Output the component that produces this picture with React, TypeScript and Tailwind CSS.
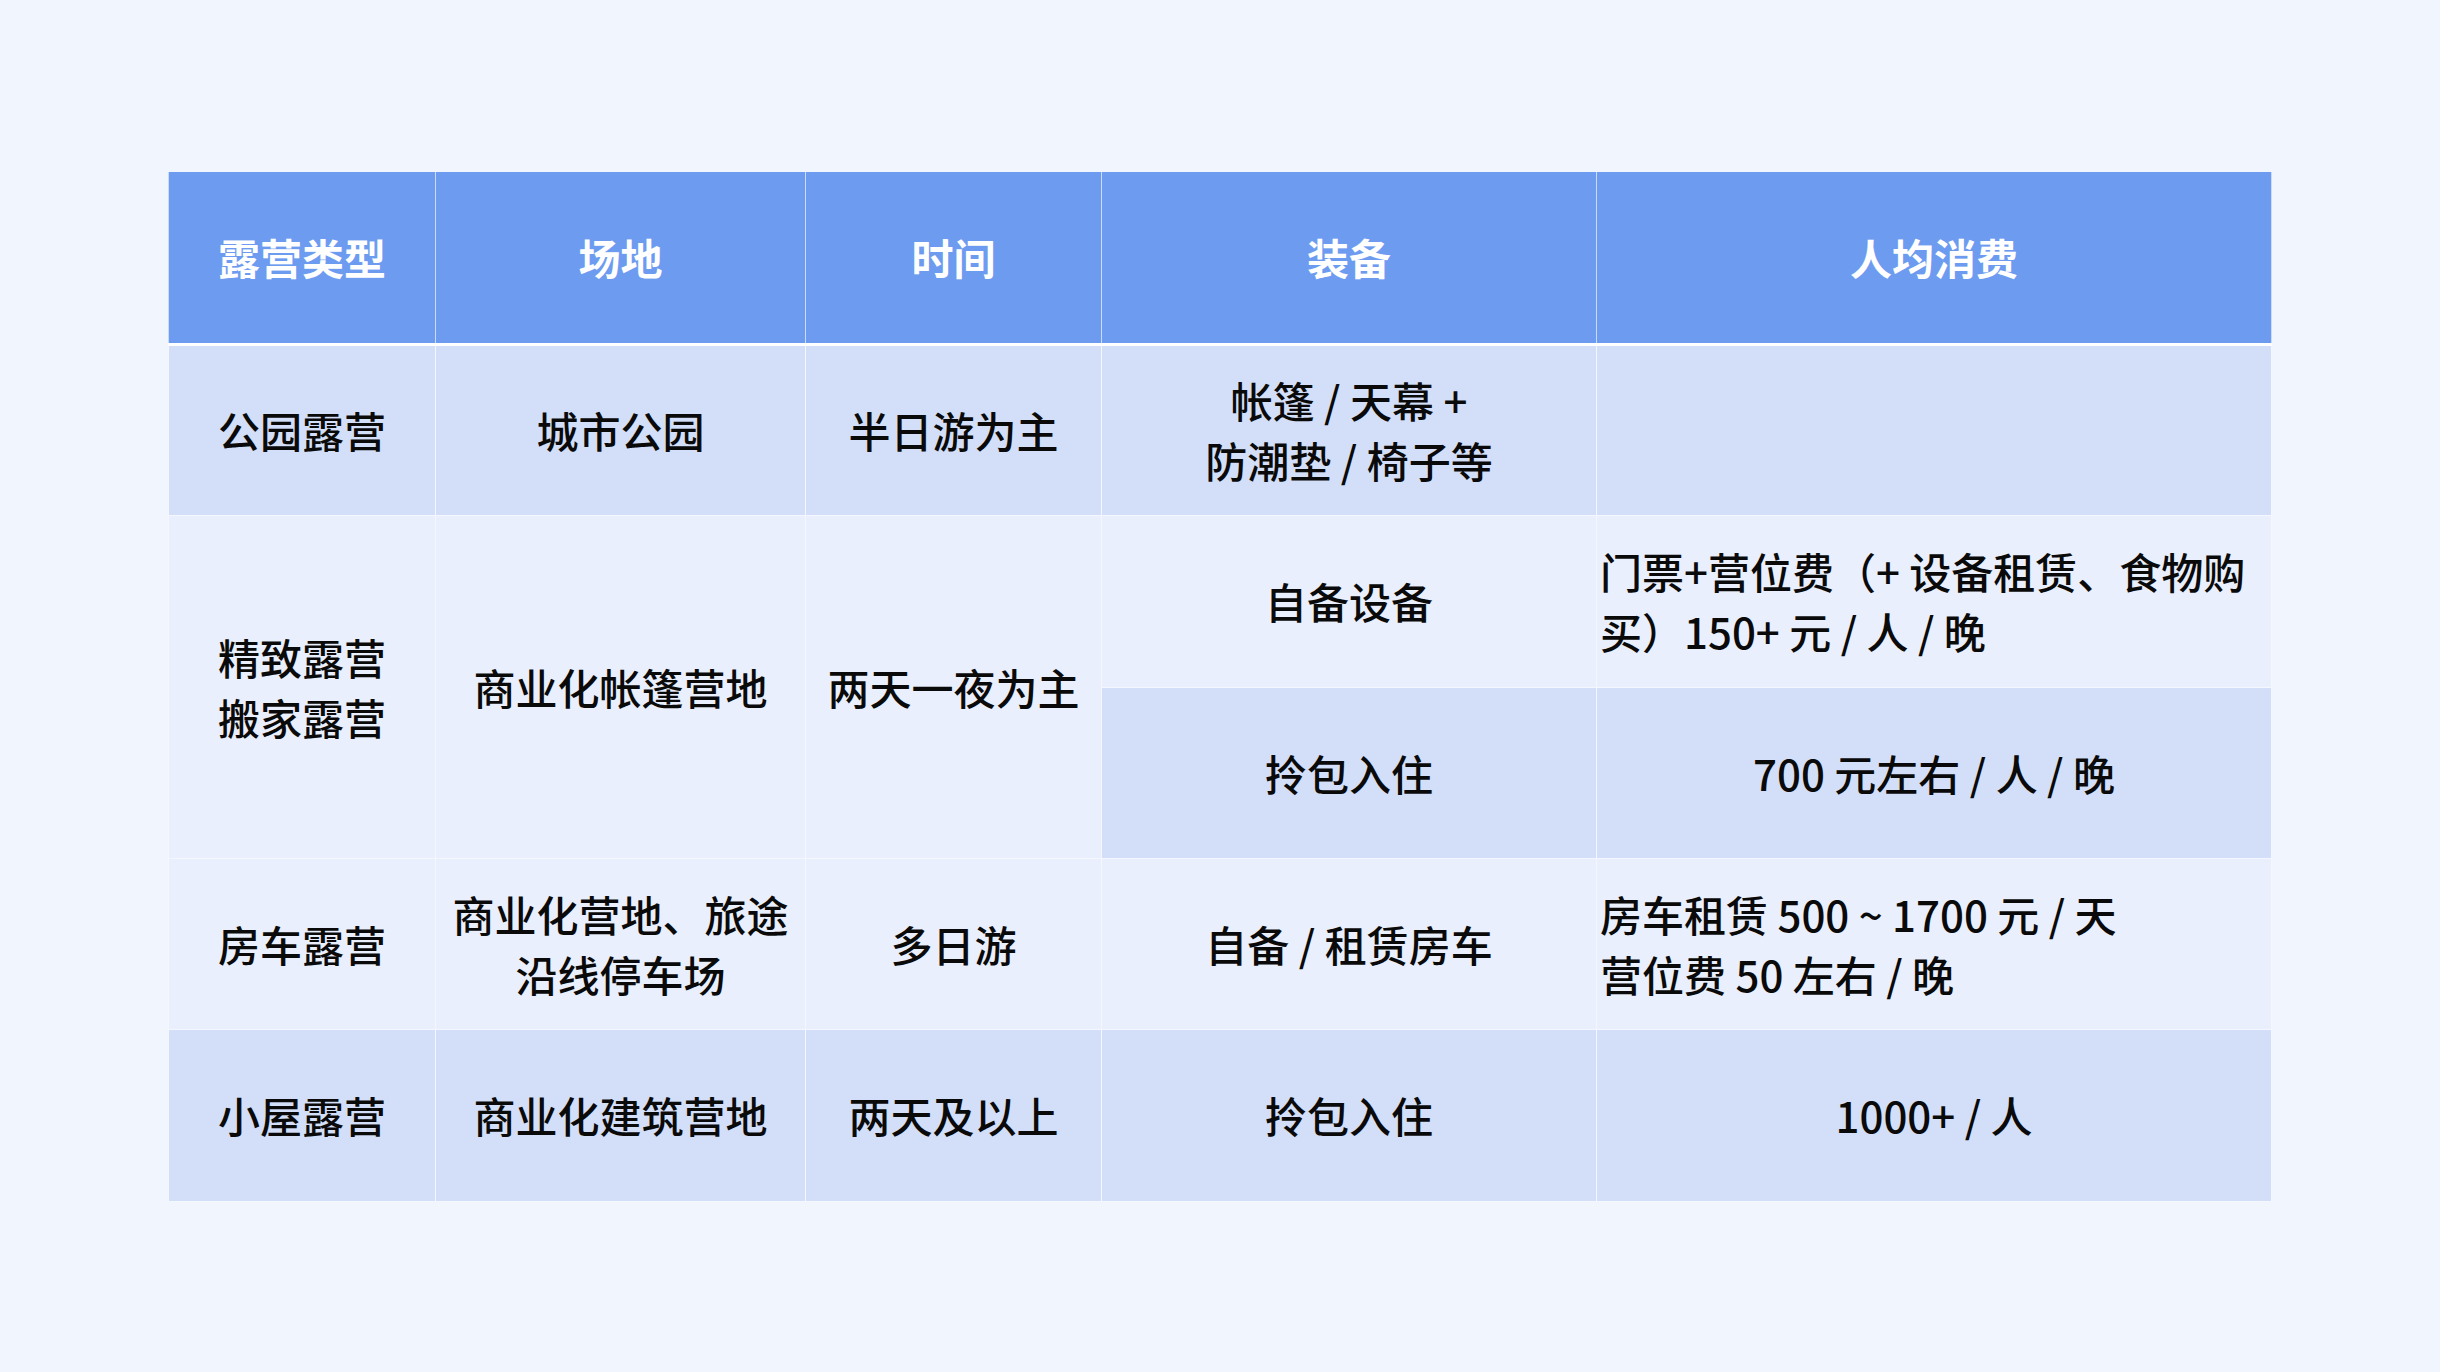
import React from "react";

const font = { fontFamily: '"Noto Sans CJK SC", "Noto Sans", sans-serif' };

export default function App() {
  const th =
    "bg-[#6d9bf0] text-white font-bold text-[42px] leading-[60px] text-center align-middle border-x border-x-[#c9dafb] border-b-[3px] border-b-white p-0";
  const tdBase =
    "text-[42px] leading-[60px] text-[#0a0a0a] font-medium align-middle border border-[#f4f7fe] p-0";
  const dark = "bg-[#d3dff8]";
  const light = "bg-[#e9effc]";
  return (
    <div
      className="w-[2440px] h-[1372px] bg-[#f0f5fe] pt-[172px] pl-[168px]"
      style={font}
    >
      <table className="table-fixed border-collapse w-[2103px]">
        <colgroup>
          <col className="w-[267px]" />
          <col className="w-[370px]" />
          <col className="w-[296px]" />
          <col className="w-[495px]" />
          <col className="w-[675px]" />
        </colgroup>
        <thead>
          <tr className="h-[172px]">
            <th className={th}>露营类型</th>
            <th className={th}>场地</th>
            <th className={th}>时间</th>
            <th className={th}>装备</th>
            <th className={th}>人均消费</th>
          </tr>
        </thead>
        <tbody>
          <tr className="h-[171px]">
            <td className={`${tdBase} ${dark} text-center`}>公园露营</td>
            <td className={`${tdBase} ${dark} text-center`}>城市公园</td>
            <td className={`${tdBase} ${dark} text-center`}>半日游为主</td>
            <td className={`${tdBase} ${dark} text-center`}>
              帐篷 / 天幕 +
              <br />
              防潮垫 / 椅子等
            </td>
            <td className={`${tdBase} ${dark}`}></td>
          </tr>
          <tr className="h-[172px]">
            <td rowSpan={2} className={`${tdBase} ${light} text-center`}>
              精致露营
              <br />
              搬家露营
            </td>
            <td rowSpan={2} className={`${tdBase} ${light} text-center`}>
              商业化帐篷营地
            </td>
            <td rowSpan={2} className={`${tdBase} ${light} text-center`}>
              两天一夜为主
            </td>
            <td className={`${tdBase} ${light} text-center`}>自备设备</td>
            <td className={`${tdBase} ${light} text-left pl-[3px] whitespace-nowrap`}>
              门票+营位费（+ 设备租赁、食物购
              <br />
              买）150+ 元 / 人 / 晚
            </td>
          </tr>
          <tr className="h-[171px]">
            <td className={`${tdBase} ${dark} text-center`}>拎包入住</td>
            <td className={`${tdBase} ${dark} text-center`}>700 元左右 / 人 / 晚</td>
          </tr>
          <tr className="h-[171px]">
            <td className={`${tdBase} ${light} text-center`}>房车露营</td>
            <td className={`${tdBase} ${light} text-center`}>
              商业化营地、旅途
              <br />
              沿线停车场
            </td>
            <td className={`${tdBase} ${light} text-center`}>多日游</td>
            <td className={`${tdBase} ${light} text-center`}>自备 / 租赁房车</td>
            <td className={`${tdBase} ${light} text-left pl-[3px] whitespace-nowrap`}>
              房车租赁 500 ~ 1700 元 / 天
              <br />
              营位费 50 左右 / 晚
            </td>
          </tr>
          <tr className="h-[172px]">
            <td className={`${tdBase} ${dark} text-center`}>小屋露营</td>
            <td className={`${tdBase} ${dark} text-center`}>商业化建筑营地</td>
            <td className={`${tdBase} ${dark} text-center`}>两天及以上</td>
            <td className={`${tdBase} ${dark} text-center`}>拎包入住</td>
            <td className={`${tdBase} ${dark} text-center`}>1000+ / 人</td>
          </tr>
        </tbody>
      </table>
    </div>
  );
}
